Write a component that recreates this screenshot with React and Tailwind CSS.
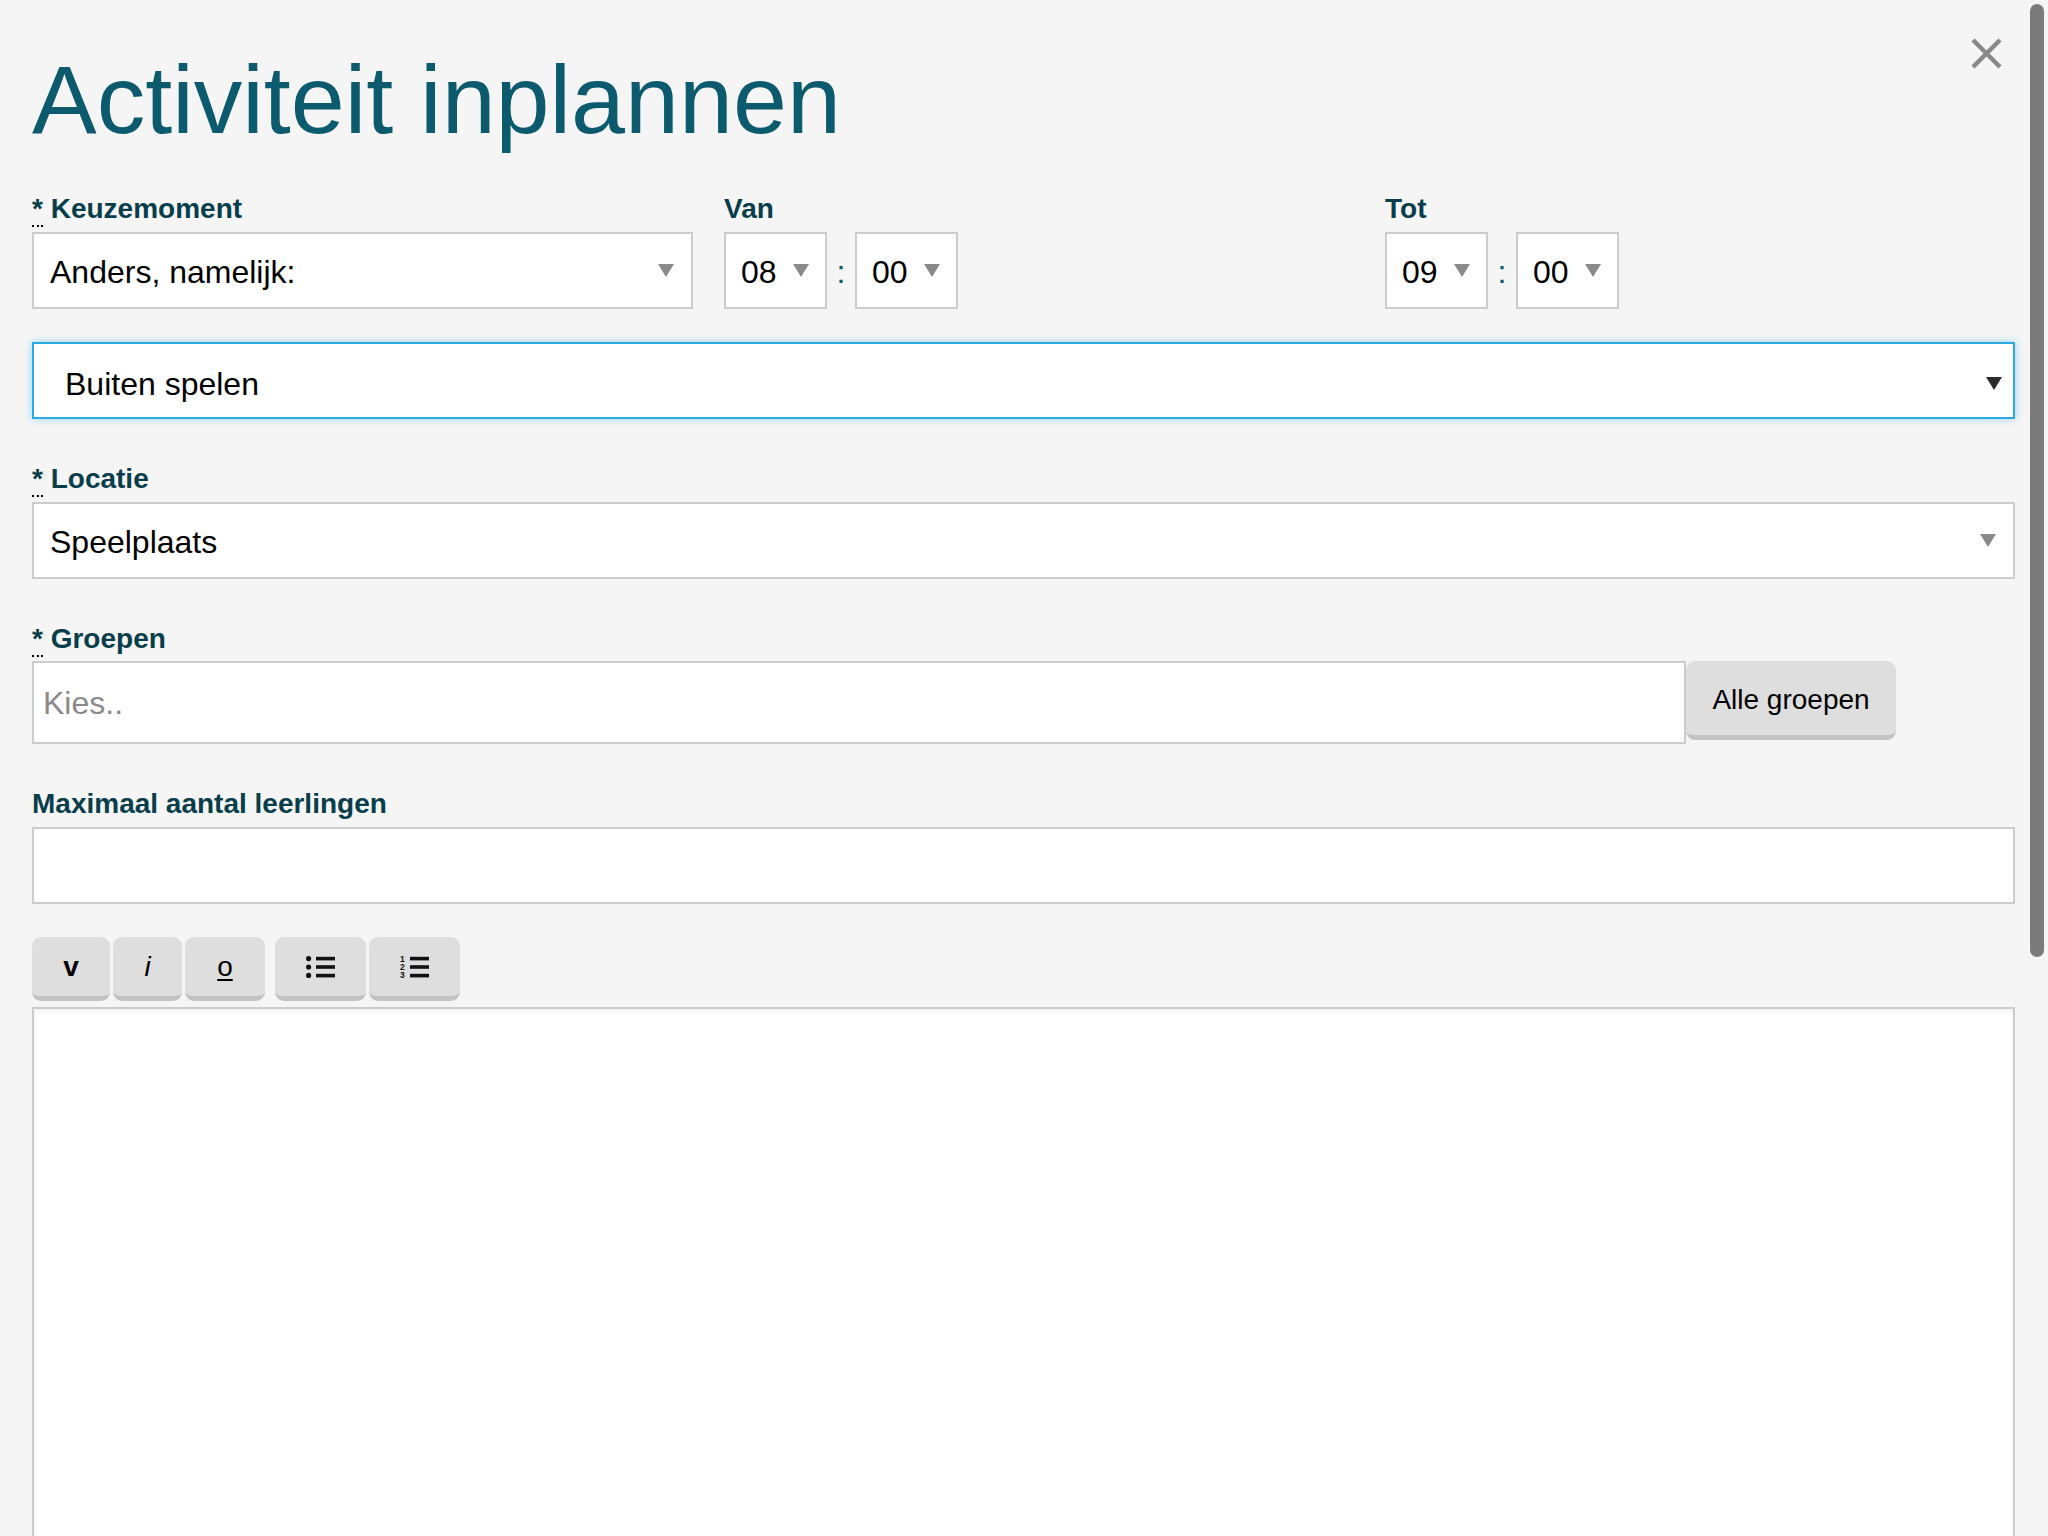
function Arrow({ dark = false }) {
  return (
    <svg width="16" height="13" viewBox="0 0 16 13" className="shrink-0">
      <path d="M0 0H16L8 13Z" fill={dark ? '#2b2b2b' : '#8a8a8a'} />
    </svg>
  )
}

function Label({ required, children, className = 'mb-[5px]' }) {
  return (
    <div className={`text-[28px] leading-[36px] font-bold text-[#083e4b] ${className}`}>
      {required && (
        <>
          <abbr className="no-underline border-b-2 border-dotted border-black pb-[1px]" title="verplicht">*</abbr>{' '}
        </>
      )}
      {children}
    </div>
  )
}

function Select({ value, className = '' }) {
  return (
    <div className={`flex h-[77px] items-center justify-between border-2 border-[#cccccc] bg-white pl-[16px] pr-[17px] text-[32px] text-black ${className}`}>
      <span className="pt-[3px]">{value}</span>
      <Arrow />
    </div>
  )
}

function TimeSelect({ value }) {
  return (
    <div className="flex h-[77px] w-[103px] items-center justify-between border-2 border-[#cccccc] bg-white pl-[15px] pr-[16px] text-[32px] text-black">
      <span className="pt-[3px]">{value}</span>
      <Arrow />
    </div>
  )
}

function TimePair({ h, m }) {
  return (
    <div className="flex items-center">
      <TimeSelect value={h} />
      <span className="w-[28px] pt-[3px] text-center text-[32px] text-[#0b5a6e]">:</span>
      <TimeSelect value={m} />
    </div>
  )
}

function ToolButton({ children, className = '' }) {
  return (
    <button
      type="button"
      className={`flex h-[64px] items-center justify-center rounded-[9px] border-b-[5px] border-[#c3c3c3] bg-[#dedede] text-black ${className}`}
    >
      {children}
    </button>
  )
}

function BulletIcon() {
  return (
    <svg width="29" height="22" viewBox="0 0 29 22">
      <circle cx="2.6" cy="2.6" r="2.6" fill="#111" />
      <circle cx="2.6" cy="11" r="2.6" fill="#111" />
      <circle cx="2.6" cy="19.4" r="2.6" fill="#111" />
      <rect x="10" y="0.8" width="19" height="3.6" fill="#111" />
      <rect x="10" y="9.2" width="19" height="3.6" fill="#111" />
      <rect x="10" y="17.8" width="19" height="3.6" fill="#111" />
    </svg>
  )
}

function NumberedIcon() {
  return (
    <svg width="29" height="24" viewBox="0 0 29 24">
      <g fill="#111" fontFamily="Liberation Sans, Arial, sans-serif" fontWeight="700" fontSize="8.5">
        <text x="0" y="7">1</text>
        <text x="0" y="15">2</text>
        <text x="0" y="23">3</text>
      </g>
      <rect x="10" y="1.8" width="19" height="3.6" fill="#111" />
      <rect x="10" y="10.2" width="19" height="3.6" fill="#111" />
      <rect x="10" y="18.8" width="19" height="3.6" fill="#111" />
    </svg>
  )
}

export default function App() {
  return (
    <div className="relative h-[1536px] overflow-hidden bg-[#f5f5f5] font-['Liberation_Sans',Arial,sans-serif]">
      {/* close */}
      <button type="button" className="absolute left-[1971px] top-[38px]">
        <svg width="31" height="31" viewBox="0 0 31 31">
          <path d="M2 2L29 29M29 2L2 29" stroke="#898989" strokeWidth="4.5" />
        </svg>
      </button>
      {/* scrollbar thumb */}
      <div className="absolute left-[2030px] top-[4px] h-[953px] w-[14px] rounded-full bg-[#7b7b7b]" />

      <div className="pl-[32px] pr-[33px] pt-[46px]">
        <h1 className="text-[97px] leading-[108px] text-[#0b5a6e]">Activiteit inplannen</h1>

        <div className="mt-[37px] grid grid-cols-3">
          <div>
            <Label required>Keuzemoment</Label>
            <Select value="Anders, namelijk:" />
          </div>
          <div className="pl-[31px]">
            <Label>Van</Label>
            <TimePair h="08" m="00" />
          </div>
          <div className="pl-[31px]">
            <Label>Tot</Label>
            <TimePair h="09" m="00" />
          </div>
        </div>

        <div className="mt-[33px] flex h-[77px] items-center justify-between border-2 border-[#29abe2] bg-white pl-[31px] pr-[11px] text-[32px] text-black shadow-[0_0_8px_rgba(41,171,226,0.45)]">
          <span className="pt-[6px]">Buiten spelen</span>
          <span className="pt-[6px]"><Arrow dark /></span>
        </div>

        <div className="mt-[42px]">
          <Label required>Locatie</Label>
          <Select value="Speelplaats" className="h-[76px] pl-[15px]" />
        </div>

        <div className="mt-[42px]">
          <Label required className="mb-[4px]">Groepen</Label>
          <div className="flex items-start">
            <div className="flex h-[83px] w-[1654px] items-center border-2 border-[#cccccc] bg-white pl-[9px] text-[32px] text-[#8a8a8a]">
              Kies..
            </div>
            <button
              type="button"
              className="h-[79px] w-[210px] rounded-[9px] border-b-[5px] border-[#c3c3c3] bg-[#dedede] pt-[3px] text-[28px] text-black"
            >
              Alle groepen
            </button>
          </div>
        </div>

        <div className="mt-[42px]">
          <Label>Maximaal aantal leerlingen</Label>
          <div className="h-[77px] border-2 border-[#cccccc] bg-white" />
        </div>

        <div className="mt-[33px] flex">
          <ToolButton className="w-[78px] text-[28px] font-bold">v</ToolButton>
          <ToolButton className="ml-[3px] w-[69px] text-[28px] italic">i</ToolButton>
          <ToolButton className="ml-[3px] w-[80px] text-[28px] underline underline-offset-[3px]">o</ToolButton>
          <ToolButton className="ml-[10px] w-[91px]"><BulletIcon /></ToolButton>
          <ToolButton className="ml-[3px] w-[91px]"><NumberedIcon /></ToolButton>
        </div>

        <div className="mt-[6px] h-[600px] border-2 border-[#cccccc] bg-white shadow-[inset_0_3px_4px_rgba(0,0,0,0.05)]" />
      </div>
    </div>
  )
}
